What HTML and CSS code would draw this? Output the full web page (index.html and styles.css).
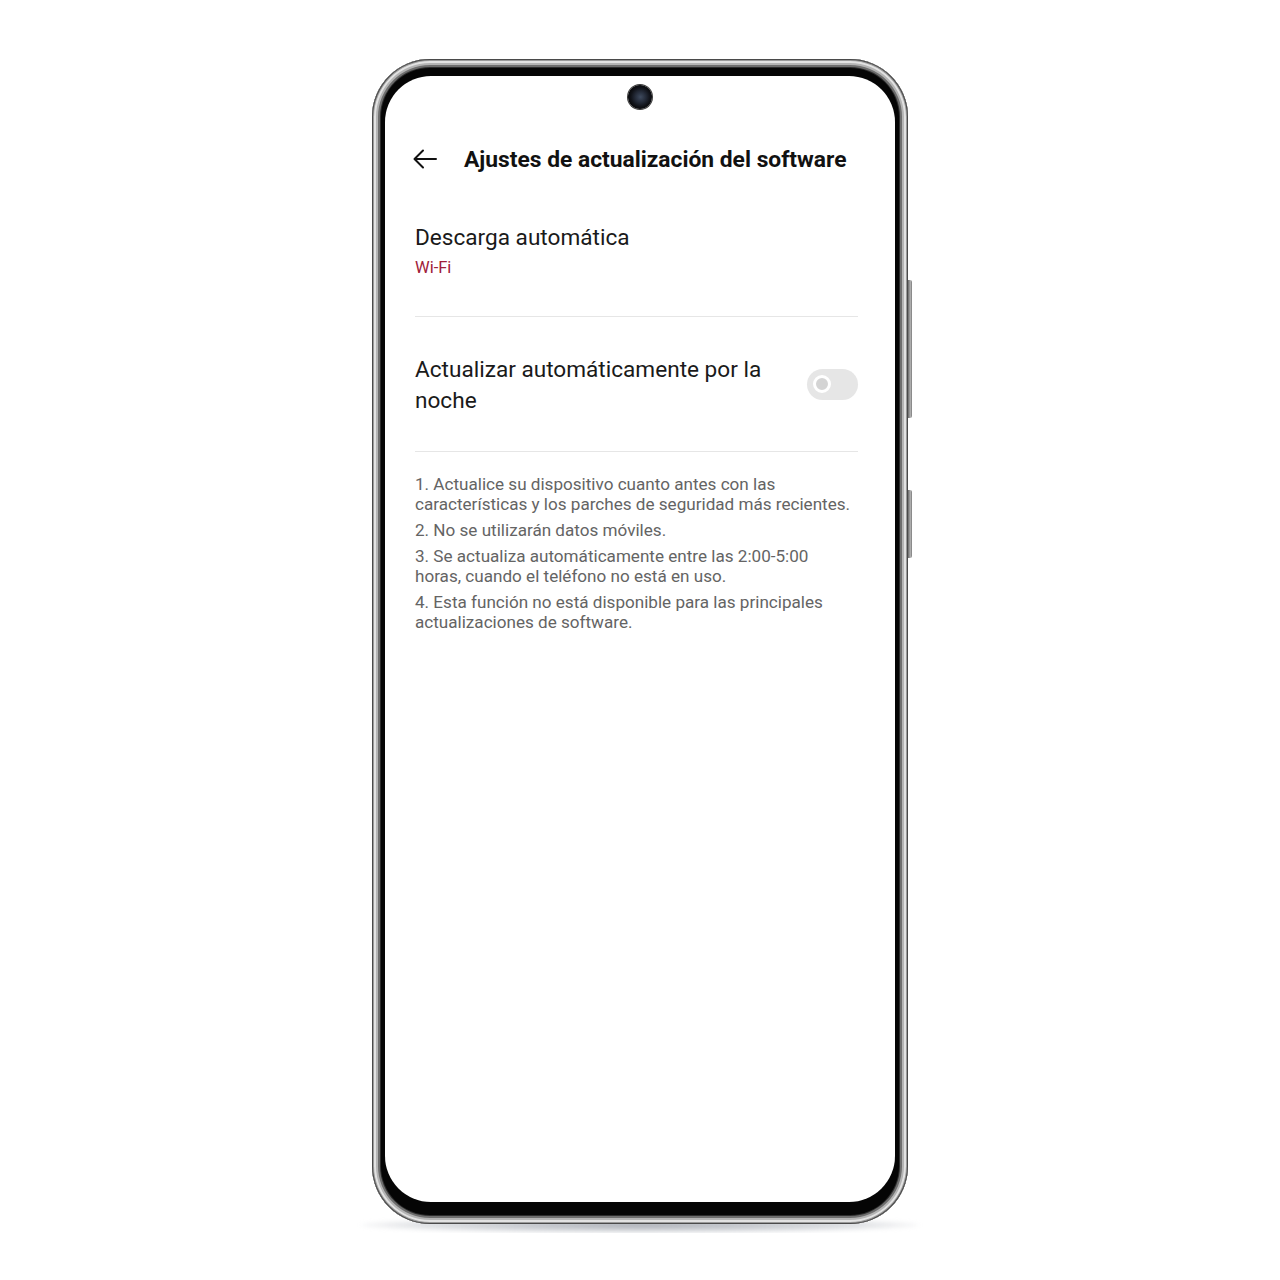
FILE: index.html
```html
<!DOCTYPE html>
<html lang="es">
<head>
  <meta charset="UTF-8">
  <title>Ajustes de actualización del software</title>
  <link rel="stylesheet" href="styles.css">
</head>
<body>

  <div class="stage">
    <div class="phone">
      <span class="side-key volume"></span>
      <span class="side-key power"></span>

      <div class="screen">
        <span class="camera"></span>

        <header class="topbar">
          <svg class="back" width="26" height="20" viewBox="0 0 26 20">
            <path d="M24 10H2.5M11 1.5L2.5 10l8.5 8.5" fill="none" stroke="#111" stroke-width="2" stroke-linecap="round" stroke-linejoin="round"/>
          </svg>
          <h1>Ajustes de actualización del software</h1>
        </header>

        <div class="item">
          <div class="item-title">Descarga automática</div>
          <div class="item-value">Wi-Fi</div>
        </div>

        <div class="item item-switch">
          <div class="item-title">Actualizar automáticamente por la noche</div>
          <span class="switch"><span class="knob"></span></span>
        </div>

        <div class="notes">
          <p>1. Actualice su dispositivo cuanto antes con las características y los parches de seguridad más recientes.</p>
          <p>2. No se utilizarán datos móviles.</p>
          <p>3. Se actualiza automáticamente entre las 2:00-5:00 horas, cuando el teléfono no está en uso.</p>
          <p>4. Esta función no está disponible para las principales actualizaciones de software.</p>
        </div>
      </div>
    </div>
    <div class="floor-shadow"></div>
  </div>

</body>
</html>
```

FILE: styles.css
```css
body {
  margin: 0;
  background: #fff;
  font-family: Roboto, "Noto Sans", Arial, sans-serif;
}

.stage {
  display: flex;
  flex-direction: column;
  align-items: center;
  padding-top: 59px;
  position: relative;
}

/* device body: silver rim drawn with inset rings, black bezel as background */
.phone {
  position: relative;
  width: 536px;
  height: 1165px;
  box-sizing: border-box;
  padding: 17px 13px 22px;
  border-radius: 58px;
  background: #050505;
  box-shadow:
    inset 0 0 0 1px #4a4a4a,
    inset 0 0 0 2px #9a9a9a,
    inset 0 0 0 4px #e2e2e2,
    inset 0 0 0 6px #b4b4b4,
    inset 0 0 0 8px #6e6e6e,
    inset 0 0 0 9px #2c2c2c;
  z-index: 1;
}

.side-key {
  position: absolute;
  right: -4px;
  width: 4px;
  border-radius: 0 2px 2px 0;
  background: linear-gradient(90deg, #6a6a6a, #b0b0b0 60%, #7a7a7a);
}
.side-key.volume { top: 221px; height: 138px; }
.side-key.power { top: 431px; height: 68px; }

.screen {
  position: relative;
  height: 100%;
  box-sizing: border-box;
  padding: 55px 37px 0 30px;
  background: #fff;
  border-radius: 46px;
  overflow: hidden;
}

.camera {
  position: absolute;
  top: 9px;
  left: 50%;
  width: 24px;
  height: 24px;
  margin-left: -12px;
  border-radius: 50%;
  background: radial-gradient(circle at 52% 50%, #3e4a5e 0, #252c3a 30%, #101218 55%, #060607 75%);
  box-shadow: 0 0 0 1px #3a3a3a;
}

.topbar {
  display: flex;
  align-items: center;
  height: 56px;
}
.back {
  margin-left: -3px;
  margin-right: 26px;
}
.topbar h1 {
  margin: 0;
  font-size: 22.8px;
  font-weight: 700;
  color: #111;
  white-space: nowrap;
}

.item {
  padding: 37px 0 38px;
  border-bottom: 1px solid #e6e6e6;
}
.item-title {
  font-size: 22.6px;
  line-height: 28px;
  color: #1a1a1a;
}
.item-value {
  margin-top: 6px;
  font-size: 16.5px;
  line-height: 20px;
  color: #a0203a;
}

.item-switch {
  display: flex;
  align-items: center;
  gap: 24px;
  padding: 37px 0 35px;
}
.item-switch .item-title {
  flex: 1;
  line-height: 31px;
}

.switch {
  position: relative;
  flex: none;
  width: 51px;
  height: 31px;
  margin-top: -2px;
  border-radius: 16px;
  background: #e6e6e6;
}
.knob {
  position: absolute;
  top: 6.5px;
  left: 6px;
  width: 12px;
  height: 12px;
  border-radius: 50%;
  border: 3px solid #fff;
  background: #d4d4d4;
}

.notes {
  padding-top: 22px;
}
.notes p {
  margin: 0 0 6px;
  font-size: 17.1px;
  line-height: 20px;
  color: #646464;
}

.floor-shadow {
  width: 560px;
  height: 16px;
  margin-top: -7px;
  border-radius: 50%;
  background: radial-gradient(ellipse at center, rgba(140,145,155,0.75) 0, rgba(180,185,192,0.45) 55%, rgba(255,255,255,0) 75%);
  filter: blur(2px);
}
```
